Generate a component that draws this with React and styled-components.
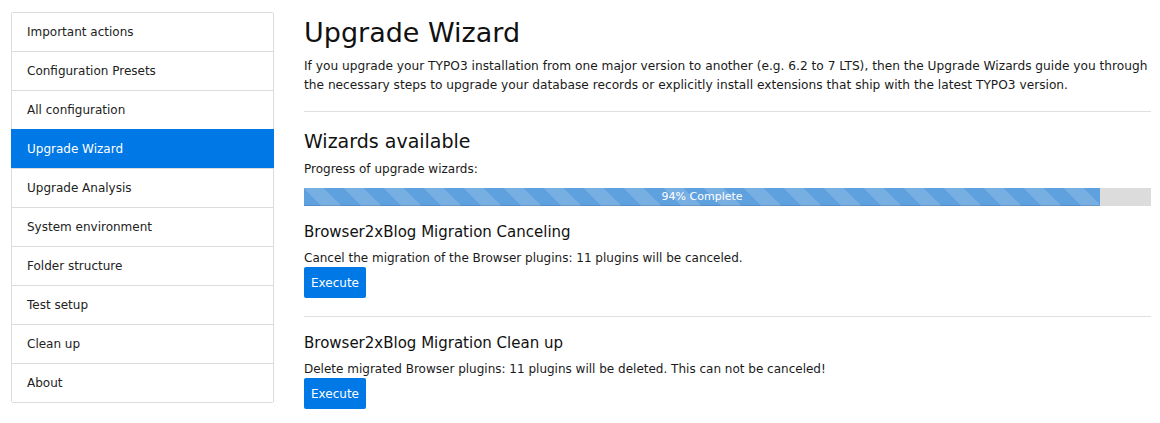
import React from 'react'
import styled, { createGlobalStyle } from 'styled-components'

const GlobalStyle = createGlobalStyle`
  body {
    margin: 0;
    background: #fff;
    font-family: 'DejaVu Sans', Verdana, sans-serif;
    font-size: 12px;
    color: #1a1a1a;
  }
`

const Page = styled.div`
  display: flex;
  align-items: flex-start;
  gap: 30px;
  padding: 12px 9px 0 11px;
`

const Nav = styled.div`
  width: 261px;
  flex-shrink: 0;
  border: 1px solid #dcdcdc;
  border-radius: 2px;
  display: flex;
  flex-direction: column;
`

const NavItem = styled.div`
  height: 38px;
  display: flex;
  align-items: center;
  font-size: 12px;
  color: ${(props) => (props.active ? '#fff' : '#222')};
  background: ${(props) => (props.active ? '#0078e6' : '#fff')};
  border-top: 1px solid ${(props) => (props.active ? '#0078e6' : '#dcdcdc')};
  margin: ${(props) => (props.active ? '0 -1px' : '0')};
  padding-left: ${(props) => (props.active ? '16px' : '15px')};
  &:first-child {
    border-top: none;
  }
`

const Main = styled.div`
  flex: 1;
  min-width: 0;
`

const Title = styled.h1`
  margin: 5px 0 0;
  font-size: 27px;
  font-weight: normal;
  line-height: 32px;
  color: #111;
`

const Intro = styled.p`
  margin: 8px 0 0;
  font-size: 12.2px;
  line-height: 19px;
  color: #1a1a1a;
`

const Rule = styled.hr`
  border: none;
  border-top: 1px solid #e0e0e0;
  margin: ${(props) => props.m || '16px 0 0'};
`

const SubTitle = styled.h2`
  margin: 17px 0 0;
  font-size: 19px;
  font-weight: normal;
  line-height: 24px;
  color: #111;
`

const Label = styled.div`
  margin-top: 7px;
  line-height: 19px;
`

const Track = styled.div`
  margin-top: 9px;
  height: 18px;
  background: #dcdcdc;
  display: flex;
`

const Bar = styled.div`
  height: 100%;
  background-color: #5fa1de;
  background-image: linear-gradient(
    45deg,
    rgba(255, 255, 255, 0.15) 25%,
    transparent 25%,
    transparent 50%,
    rgba(255, 255, 255, 0.15) 50%,
    rgba(255, 255, 255, 0.15) 75%,
    transparent 75%,
    transparent
  );
  background-size: 40px 40px;
  box-shadow: inset 0 -1px 0 rgba(0, 0, 0, 0.12);
  color: #fff;
  font-size: 11px;
  line-height: 18px;
  text-align: center;
`

const Wizard = styled.div``

const WizardTitle = styled.h3`
  margin: 16px 0 0;
  font-size: 15px;
  font-weight: normal;
  line-height: 20px;
  color: #111;
`

const WizardText = styled.div`
  margin-top: 9px;
  line-height: 15px;
`

const ExecuteButton = styled.button`
  margin-top: 1px;
  height: 31px;
  padding: 0 7px;
  border: none;
  border-radius: 2px;
  background: #0078e6;
  color: #fff;
  font-family: inherit;
  font-size: 12px;
  cursor: pointer;
`

const navItems = [
  'Important actions',
  'Configuration Presets',
  'All configuration',
  'Upgrade Wizard',
  'Upgrade Analysis',
  'System environment',
  'Folder structure',
  'Test setup',
  'Clean up',
  'About',
]

const wizards = [
  {
    title: 'Browser2xBlog Migration Canceling',
    text: 'Cancel the migration of the Browser plugins: 11 plugins will be canceled.',
  },
  {
    title: 'Browser2xBlog Migration Clean up',
    text: 'Delete migrated Browser plugins: 11 plugins will be deleted. This can not be canceled!',
  },
]

const App = () => {
  const progress = 94
  return (
    <>
      <GlobalStyle />
      <Page>
        <Nav>
          {navItems.map((item) => (
            <NavItem key={item} active={item === 'Upgrade Wizard'}>
              {item}
            </NavItem>
          ))}
        </Nav>
        <Main>
          <Title>Upgrade Wizard</Title>
          <Intro>
            If you upgrade your TYPO3 installation from one major version to
            another (e.g. 6.2 to 7 LTS), then the Upgrade Wizards guide you
            through the necessary steps to upgrade your database records or
            explicitly install extensions that ship with the latest TYPO3
            version.
          </Intro>
          <Rule />
          <SubTitle>Wizards available</SubTitle>
          <Label>Progress of upgrade wizards:</Label>
          <Track>
            <Bar style={{ width: `${progress}%` }}>{progress}% Complete</Bar>
          </Track>
          {wizards.map((w, i) => (
            <Wizard key={w.title}>
              {i > 0 && <Rule m="18px 0 0" />}
              <WizardTitle>{w.title}</WizardTitle>
              <WizardText>{w.text}</WizardText>
              <ExecuteButton>Execute</ExecuteButton>
            </Wizard>
          ))}
        </Main>
      </Page>
    </>
  )
}

export default App
